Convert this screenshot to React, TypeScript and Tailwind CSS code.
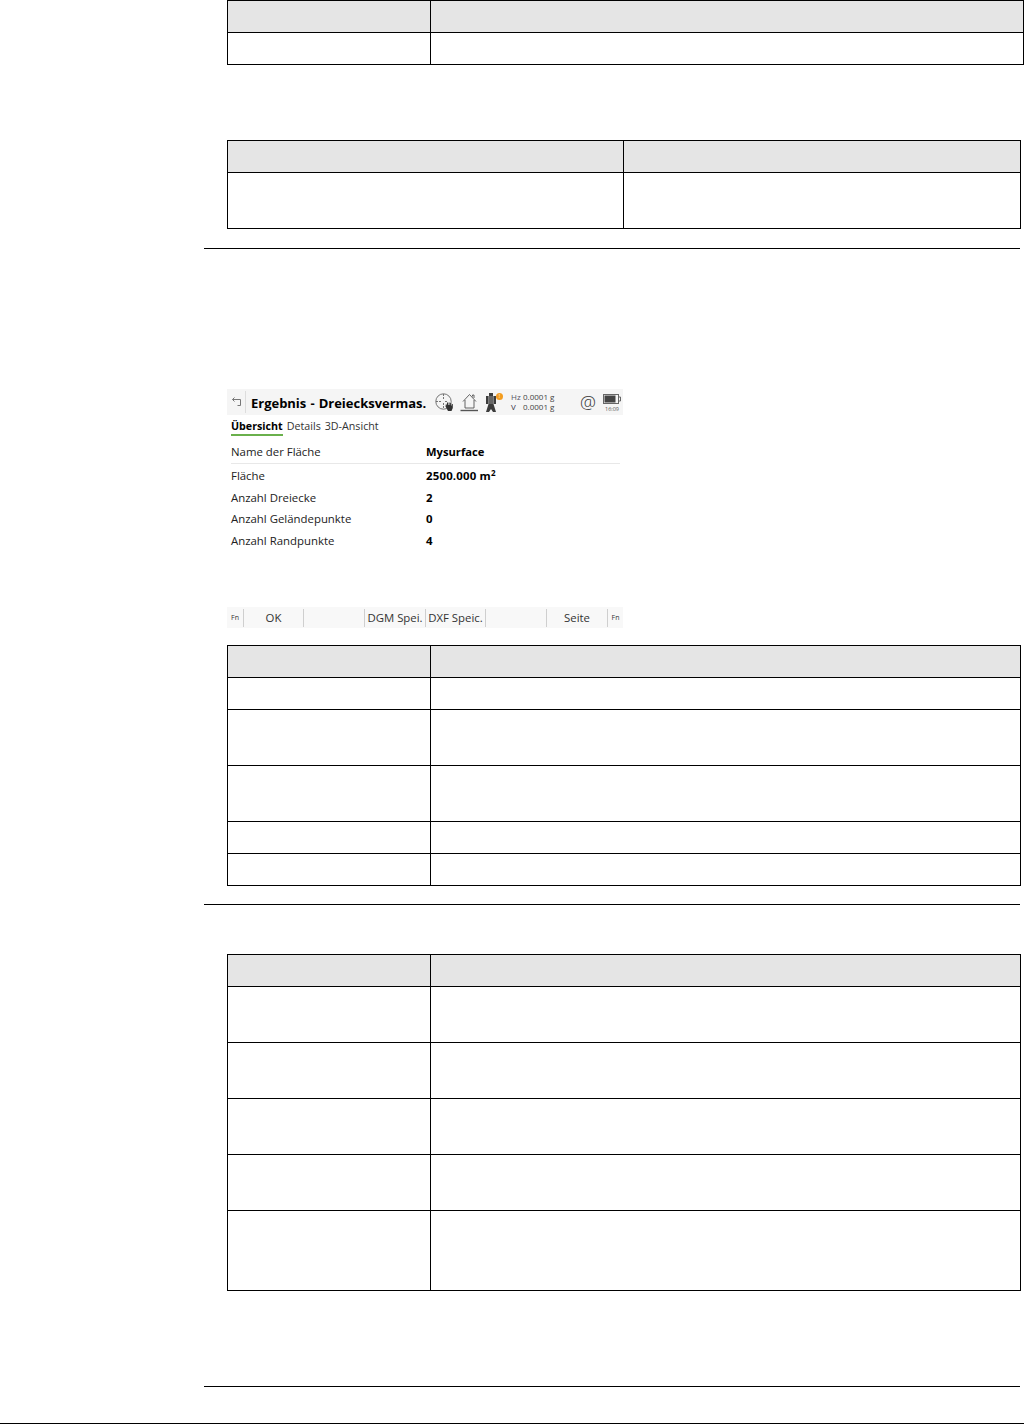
const font = 'font-["Open_Sans","Noto_Sans",sans-serif]';

const tables = [
  { cols: 'w-[797px]', first: 'w-[203px]', rows: [31, 31] },
  { cols: 'w-[794px]', first: 'w-[396px]', rows: [31, 55] },
  { cols: 'w-[794px]', first: 'w-[203px]', rows: [31, 31, 55, 55, 31, 31] },
  { cols: 'w-[794px]', first: 'w-[203px]', rows: [31, 55, 55, 55, 55, 79] },
];

function DocTable({ index }: { index: number }) {
  const t = tables[index];
  return (
    <div className={`ml-[23px] ${t.cols} border-t border-l border-r border-black`}>
      {t.rows.map((h, i) => (
        <div
          key={i}
          className={`flex border-b border-black ${i === 0 ? 'bg-[#e5e5e5]' : 'bg-white'}`}
          style={{ height: h + 1 }}
        >
          <div className={`${t.first} shrink-0 border-r border-black`} />
          <div className="flex-1" />
        </div>
      ))}
    </div>
  );
}

function Rule() {
  return <div className="h-px w-[816px] bg-black" />;
}

function BackIcon() {
  return (
    <svg width="12" height="12" viewBox="0 0 12 12" fill="none" stroke="#777" strokeWidth="1">
      <path d="M1.5 3.5h8v6h-3" />
      <path d="M3.5 1.5l-2 2 2 2" />
    </svg>
  );
}

function CrossIcon() {
  return (
    <svg width="19" height="19" viewBox="0 0 19 19" fill="none" stroke="#555" strokeWidth="0.8">
      <circle cx="8.5" cy="8.5" r="7.7" />
      <path d="M8.5 1v6M8.5 10v6M1 8.5h6M10 8.5h3" strokeDasharray="2 1" />
      <path
        d="M11 10.5l1 2v-3h1v2.500h.6V9.500h1v2.500h.6v-2h1v2.500h.6v-1.500h1v4l-1.300 3h-3.500l-2.500-4.500z"
        fill="#333"
        stroke="none"
      />
    </svg>
  );
}

function HomeIcon() {
  return (
    <svg width="19" height="19" viewBox="0 0 19 19" fill="none" stroke="#555" strokeWidth="0.9">
      <path d="M3 8.500L9.500 1.500l6.500 7" />
      <path d="M5 7v8h9V7" />
      <path d="M12.500 3.500V2h1.500v3" />
      <path d="M0.500 17.500h17.500" strokeWidth="1.400" />
    </svg>
  );
}

function InstrumentIcon() {
  return (
    <div className="relative h-[19px] w-[18px]">
      <svg width="12" height="19" viewBox="0 0 12 19" fill="#3c3c3c">
        <rect x="4" y="0" width="4" height="3" />
        <rect x="1" y="3" width="2.500" height="8" />
        <rect x="8.500" y="3" width="2.500" height="8" />
        <rect x="3.500" y="3" width="5" height="8" fill="#666" />
        <path d="M3.500 11h5l2.500 8H8l-2-3-2 3H1z" />
      </svg>
      <span className="absolute left-[11px] top-0 flex h-[7px] w-[7px] items-center justify-center rounded-full bg-[#f39c1f] text-[5px] leading-none text-white">
        !
      </span>
    </div>
  );
}

function BatteryIcon() {
  return (
    <svg width="18" height="10" viewBox="0 0 18 10" fill="none">
      <rect x="0.500" y="0.500" width="15" height="9" stroke="#666" />
      <rect x="1.500" y="1.500" width="11" height="7" fill="#444" />
      <path d="M16 3h1.500v4H16" stroke="#666" />
    </svg>
  );
}

function DataRow({ label, value, line }: { label: string; value: React.ReactNode; line?: boolean }) {
  return (
    <div
      className={`flex items-center text-[11.4px] text-[#222] ${
        line ? 'mr-[3px] h-[23px] border-b border-[#e8e8e8]' : 'h-[21.5px]'
      }`}
    >
      <span className="w-[195px] shrink-0">{label}</span>
      <span className="font-bold text-black">{value}</span>
    </div>
  );
}

function Softkey({ label, width }: { label?: string; width: string }) {
  return (
    <div className={`${width} flex h-[18px] items-center justify-center border-r border-[#cfcfcf] text-[11.4px] text-[#333]`}>
      {label}
    </div>
  );
}

function DeviceScreen() {
  return (
    <div className={`ml-[23px] flex h-[239px] w-[396px] flex-col justify-between ${font}`}>
      <div>
        <div className="flex h-[26px] items-center bg-[#f5f5f5] pl-[4px]">
          <div className="flex h-[22px] w-[15px] items-center border-r border-[#ddd]">
            <BackIcon />
          </div>
          <span className="ml-[5px] w-[175px] whitespace-nowrap pt-[3px] text-[13px] font-bold tracking-[-0.02px] text-black [word-spacing:0.8px]">
            Ergebnis - Dreiecksvermas.
          </span>
          <div className="ml-[9px] w-[25px]"><CrossIcon /></div>
          <div className="w-[25px]"><HomeIcon /></div>
          <div className="w-[26px]"><InstrumentIcon /></div>
          <div className="w-[69px] text-[8px] font-medium leading-[10px] text-[#444]">
            <div className="flex"><span className="w-[12px] text-[#556]">Hz</span><span>0.0001 g</span></div>
            <div className="flex"><span className="w-[12px] text-[#334]">V</span><span>0.0001 g</span></div>
          </div>
          <span className="w-[23px] text-[18px] font-light leading-none text-[#333]">@</span>
          <div className="flex flex-col items-center pt-[2px]">
            <BatteryIcon />
            <span className="mt-[2px] text-[5.5px] font-medium leading-[7px] text-[#555]">16:09</span>
          </div>
        </div>
        <div className="flex gap-[4px] pl-[4px] pt-[4px] text-[10.7px] leading-[15px] text-[#333]">
          <span className="border-b-2 border-[#6ab04c] font-bold text-black">Übersicht</span>
          <span>Details</span>
          <span>3D-Ansicht</span>
        </div>
        <div className="mt-[5px] pl-[4px]">
          <DataRow label="Name der Fläche" value={<span className="text-[11.2px]">Mysurface</span>} line />
          <div className="h-px" />
          <DataRow
            label="Fläche"
            value={
              <span className="tracking-[0.2px]">
                2500.000 m<sup className="text-[8px]">2</sup>
              </span>
            }
          />
          <DataRow label="Anzahl Dreiecke" value="2" />
          <DataRow label="Anzahl Geländepunkte" value="0" />
          <DataRow label="Anzahl Randpunkte" value="4" />
        </div>
      </div>
      <div className="flex h-[21px] items-center bg-[#f8f8f8]">
        <div className="flex h-[18px] w-[17px] items-center justify-center border-r border-[#cfcfcf] pt-px text-[7px] font-medium text-[#333]">Fn</div>
        <Softkey label="OK" width="w-[60px]" />
        <Softkey width="w-[61px]" />
        <Softkey label="DGM Spei." width="w-[61px]" />
        <Softkey label="DXF Speic." width="w-[60px]" />
        <Softkey width="w-[61px]" />
        <Softkey label="Seite" width="w-[61px]" />
        <div className="flex h-[18px] flex-1 items-center justify-center pt-px text-[7px] font-medium text-[#333]">Fn</div>
      </div>
    </div>
  );
}

export default function App() {
  return (
    <div className="relative h-[1424px] w-[1024px] overflow-hidden bg-white pl-[204px]">
      <DocTable index={0} />
      <div className="h-[75px]" />
      <DocTable index={1} />
      <div className="h-[19px]" />
      <Rule />
      <div className="h-[140px]" />
      <DeviceScreen />
      <div className="h-[17px]" />
      <DocTable index={2} />
      <div className="h-[18px]" />
      <Rule />
      <div className="h-[49px]" />
      <DocTable index={3} />
      <div className="h-[95px]" />
      <Rule />
      <div className="absolute bottom-0 left-0 h-px w-full bg-black" />
    </div>
  );
}
